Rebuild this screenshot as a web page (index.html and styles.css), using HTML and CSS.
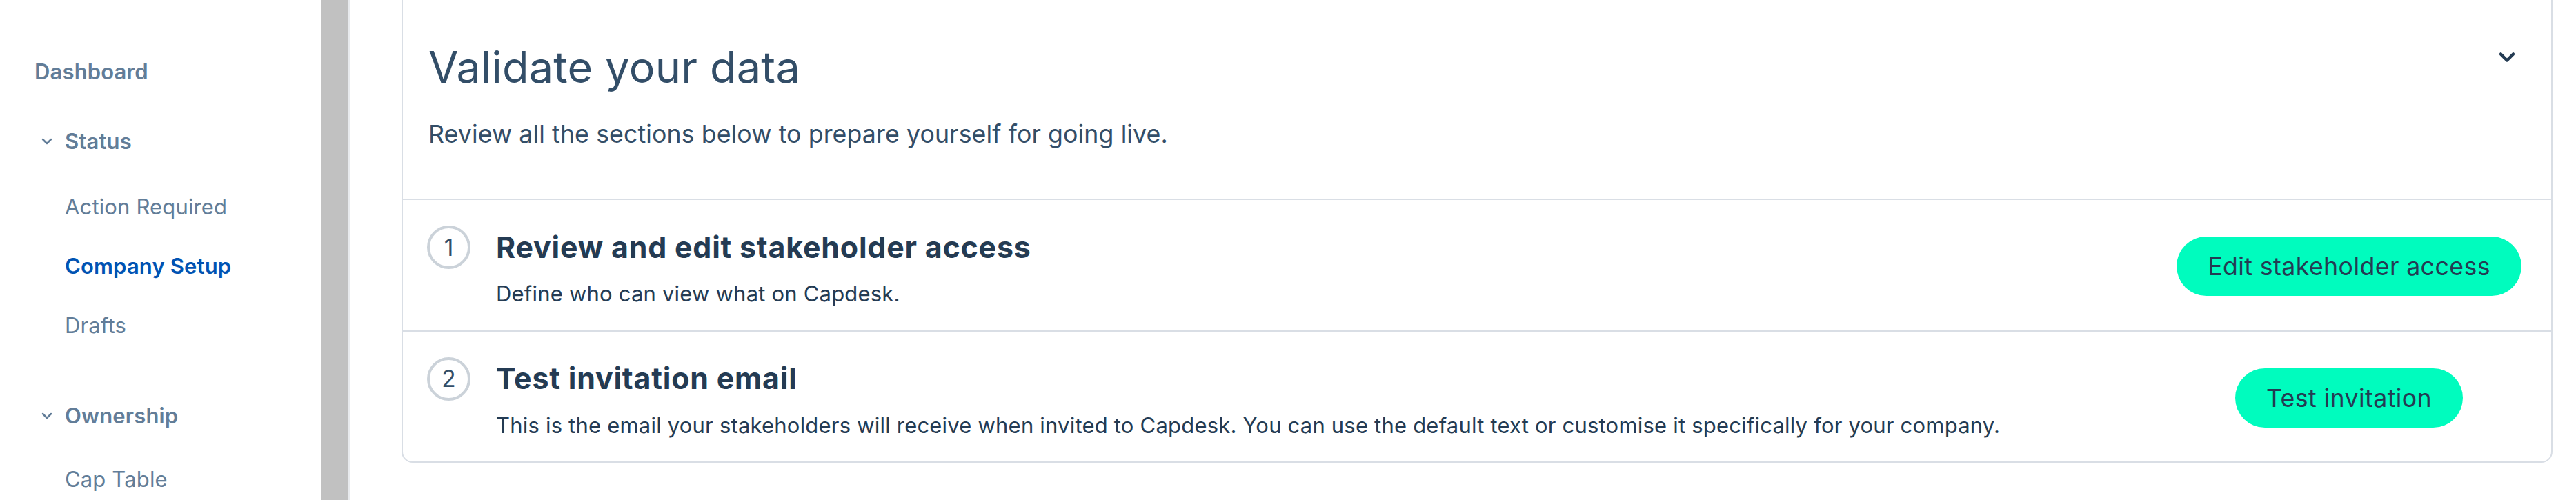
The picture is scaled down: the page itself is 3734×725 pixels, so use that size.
FILE: index.html
```html
<!DOCTYPE html>
<html lang="en">
<head>
<meta charset="utf-8">
<title>Validate your data</title>
<link rel="stylesheet" href="styles.css">
</head>
<body>
<div class="app">
  <aside class="sidebar">
    <nav class="nav">
      <a class="nav-top">Dashboard</a>
      <div class="group">
        <div class="group-head">
          <svg class="caret" viewBox="0 0 24 24"><path d="M6 9l6 6 6-6"/></svg>
          <span>Status</span>
        </div>
        <ul class="sub">
          <li><a class="sub-link">Action Required</a></li>
          <li><a class="sub-link is-active">Company Setup</a></li>
          <li><a class="sub-link">Drafts</a></li>
        </ul>
      </div>
      <div class="group group--spaced">
        <div class="group-head">
          <svg class="caret" viewBox="0 0 24 24"><path d="M6 9l6 6 6-6"/></svg>
          <span>Ownership</span>
        </div>
        <ul class="sub">
          <li><a class="sub-link">Cap Table</a></li>
        </ul>
      </div>
    </nav>
    <div class="scrollbar"></div>
  </aside>
  <main class="main">
    <section class="card">
      <header class="card-head">
        <div class="card-intro">
          <h1 class="card-title">Validate your data</h1>
          <p class="card-sub">Review all the sections below to prepare yourself for going live.</p>
        </div>
        <button class="toggle" aria-label="Collapse">
          <svg viewBox="0 0 24 24"><path d="M6 9l6 6 6-6"/></svg>
        </button>
      </header>
      <ol class="steps">
        <li class="step">
          <div class="step-body">
            <div class="step-head">
              <span class="step-num">1</span>
              <h2 class="step-title">Review and edit stakeholder access</h2>
            </div>
            <p class="step-desc">Define who can view what on Capdesk.</p>
          </div>
          <div class="step-action"><button class="btn">Edit stakeholder access</button></div>
        </li>
        <li class="step">
          <div class="step-body">
            <div class="step-head">
              <span class="step-num">2</span>
              <h2 class="step-title">Test invitation email</h2>
            </div>
            <p class="step-desc">This is the email your stakeholders will receive when invited to Capdesk. You can use the default text or customise it specifically for your company.</p>
          </div>
          <div class="step-action"><button class="btn">Test invitation</button></div>
        </li>
      </ol>
    </section>
  </main>
</div>
</body>
</html>
```
FILE: styles.css
```css
* { box-sizing: border-box; }

html, body {
  margin: 0;
  padding: 0;
  background: #ffffff;
  font-family: Inter, "Noto Sans", "Liberation Sans", sans-serif;
  line-height: 1.21;
  overflow: hidden;
}

.app {
  display: flex;
  height: 725px;
}

/* Sidebar */
.sidebar {
  display: flex;
  flex: 0 0 508px;
  height: 100%;
}

.nav {
  flex: 0 0 466px;
  padding-top: 61px;
  font-size: 31px;
  letter-spacing: 0.15px;
  color: #627d98;
}

.nav-top {
  display: flex;
  align-items: center;
  height: 86px;
  padding-left: 50px;
  font-weight: 600;
}

.group { margin-top: 15px; }
.group--spaced { margin-top: 45px; }

.group-head {
  display: flex;
  align-items: center;
  height: 86px;
  padding-left: 56px;
  font-weight: 600;
}

.caret {
  width: 24px;
  height: 24px;
  margin-right: 14px;
  fill: none;
  stroke: #627d98;
  stroke-width: 2.5;
  stroke-linecap: round;
  stroke-linejoin: round;
}

.sub {
  list-style: none;
  margin: 9px 0 0;
  padding: 0;
}

.group--spaced .sub { margin-top: 6px; }

.sub-link {
  display: flex;
  align-items: center;
  height: 86px;
  padding-left: 94px;
  font-weight: 400;
}

.sub-link.is-active {
  color: #0053b3;
  font-weight: 600;
}

.scrollbar {
  flex: 0 0 42px;
  background: #c1c1c1;
  border-right: 3px solid #e8eaed;
}

/* Main */
.main {
  flex: 1;
  min-width: 0;
  padding: 0 34px 0 74px;
}

.card {
  margin-top: -16px;
  border: 2px solid #d9dee5;
  border-radius: 16px;
  background: #ffffff;
}

.card-head {
  display: flex;
  justify-content: space-between;
  align-items: flex-start;
  padding: 73px 46px 72px 37px;
  border-bottom: 2px solid #d9dee5;
}

.card-title {
  margin: 0;
  font-size: 63px;
  font-weight: 400;
  letter-spacing: 0.2px;
  color: #334e68;
}

.card-sub {
  margin: 38px 0 0;
  font-size: 35.7px;
  font-weight: 400;
  letter-spacing: 0.1px;
  color: #334e68;
}

.toggle {
  flex: 0 0 auto;
  margin-top: 6px;
  padding: 0;
  width: 36px;
  height: 36px;
  border: 0;
  background: none;
}

.toggle svg {
  display: block;
  width: 36px;
  height: 36px;
  fill: none;
  stroke: #243b53;
  stroke-width: 3;
  stroke-linecap: round;
  stroke-linejoin: round;
}

.steps {
  list-style: none;
  margin: 0;
  padding: 0;
}

.step {
  display: flex;
  align-items: center;
  justify-content: space-between;
  padding: 37px 41px 34px 35px;
  border-bottom: 2px solid #d9dee5;
}

.step:last-child { border-bottom: 0; }

.step-head {
  display: flex;
  align-items: center;
  gap: 37px;
}

.step-num {
  flex: 0 0 auto;
  display: flex;
  align-items: center;
  justify-content: center;
  width: 63px;
  height: 63px;
  border: 4px solid #cbd2d9;
  border-radius: 50%;
  font-size: 33.3px;
  color: #334e68;
}

.step-title {
  margin: 0;
  font-size: 42.9px;
  font-weight: 700;
  letter-spacing: 0.8px;
  color: #243b53;
}

.step-desc {
  margin: 17px 0 0 100px;
  font-size: 31px;
  font-weight: 400;
  letter-spacing: 0.2px;
  color: #243b53;
}

.step-action {
  flex: 0 0 504px;
  display: flex;
  justify-content: center;
}

.btn {
  display: inline-flex;
  align-items: center;
  height: 86px;
  padding: 0 45px;
  border: 0;
  border-radius: 43px;
  background: #00fcbe;
  font-family: inherit;
  font-size: 35.7px;
  font-weight: 400;
  letter-spacing: 0.4px;
  white-space: nowrap;
  color: #243b53;
}
```
